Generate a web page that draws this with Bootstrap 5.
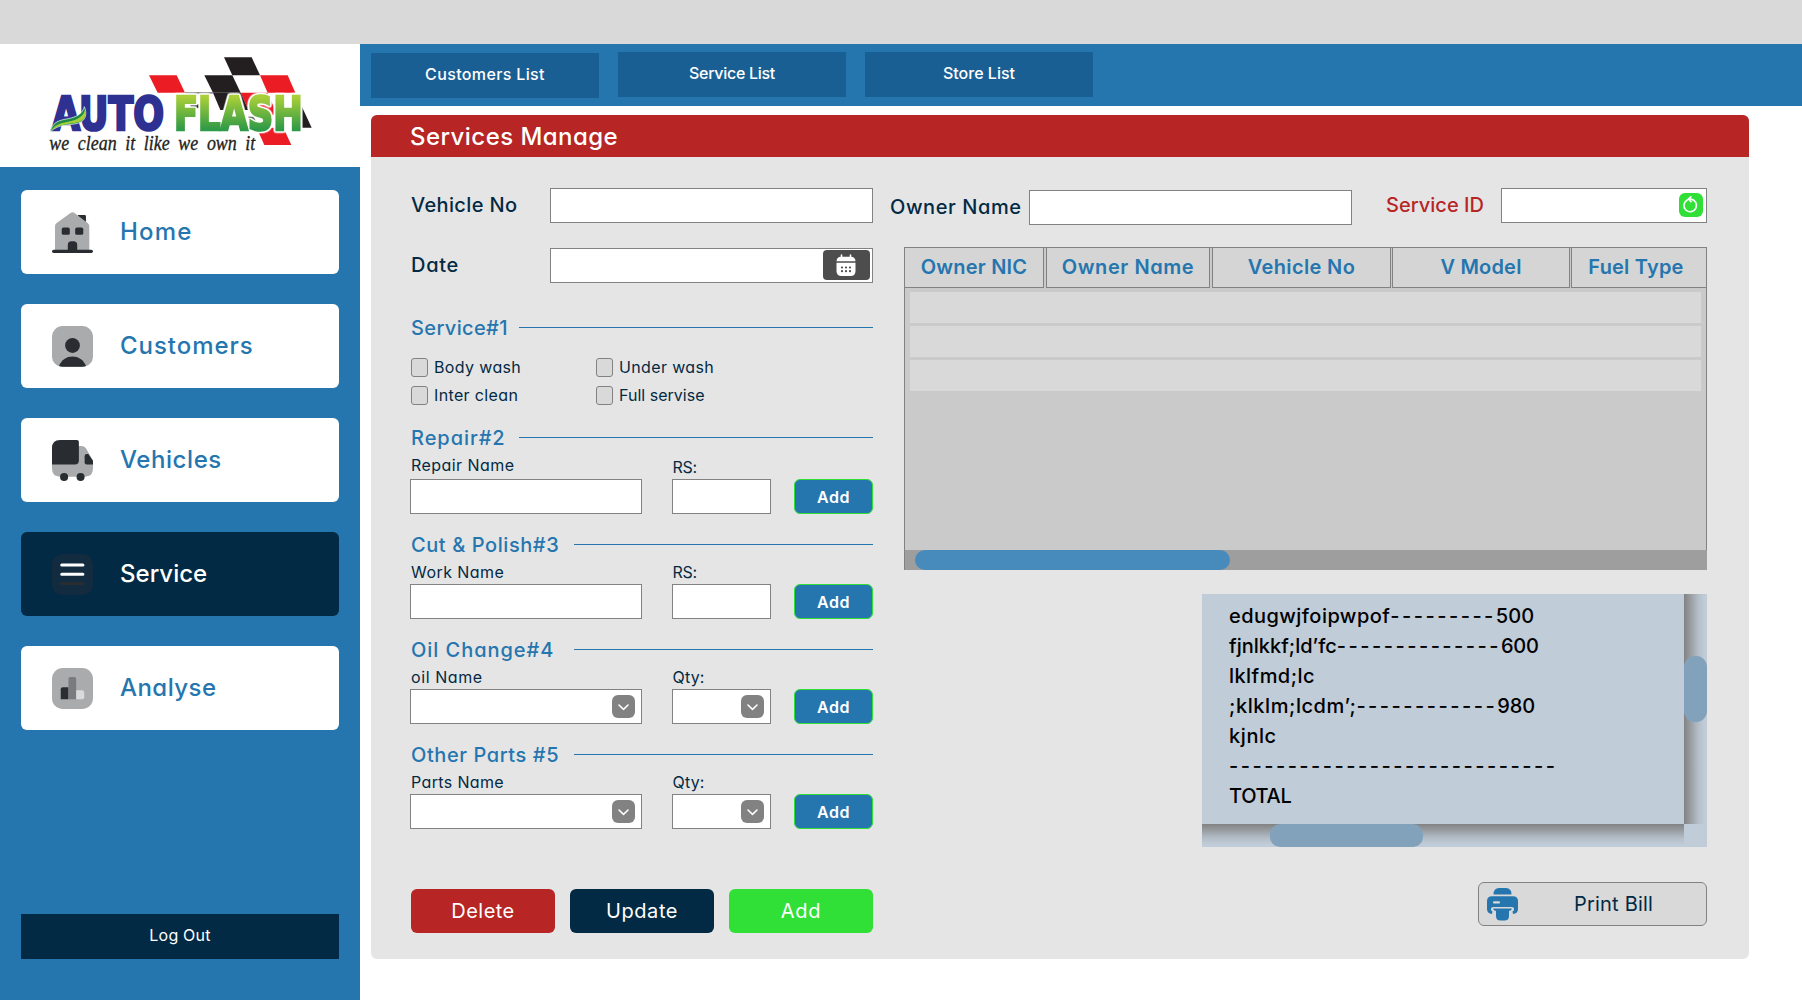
<!DOCTYPE html>
<html lang="en">
<head>
<meta charset="utf-8">
<meta name="viewport" content="width=device-width, initial-scale=1">
<title>Auto Flash - Services Manage</title>
<link href="https://cdn.jsdelivr.net/npm/bootstrap@5.3.0/dist/css/bootstrap.min.css" rel="stylesheet">
<style>
:root{--af-blue:#2576af;--af-navy:#032a44;--af-red:#b72525;--af-green:#30e037;--af-line:#828282}
body{font-family:Inter,Poppins,"Open Sans",sans-serif;font-feature-settings:"cv11";font-size:20px;font-weight:500;line-height:1;color:var(--af-navy);background:#fff;height:1000px;overflow:hidden}
/* tracking steps */
.k0{letter-spacing:-.3px}.k1{letter-spacing:.02px}.k2{letter-spacing:.2px}.k3{letter-spacing:.36px}.k4{letter-spacing:.45px}.k5{letter-spacing:.58px}.k6{letter-spacing:.7px}.k7{letter-spacing:.95px}.k8{letter-spacing:1.2px}.k9{letter-spacing:2.48px}
.titlebar{height:44px;background:#d9d9d9}
.shell{height:956px}
.sidebar{width:360px;background:var(--af-blue);flex:none}
.brand{height:123px;background:#fff;padding:6px 0 0 30px}
.word-flash{filter:drop-shadow(4px 0 0 #fff) drop-shadow(-4px 0 0 #fff) drop-shadow(0 4px 0 #fff) drop-shadow(0 -4px 0 #fff)}
.side-nav{padding:23px 21px 0;gap:30px}
.side-link{height:84px;border-radius:6px;background:#fff;color:var(--af-blue);font-size:24px;padding:0 0 0 31px;gap:27px}
.side-link.active{background:var(--af-navy);color:#fff}
.logout{margin:auto 21px 41px;height:45px;background:var(--af-navy);color:#fff;font-size:16px}
.btn.logout{padding:0 0 3px}
.topbar{height:62px;background:var(--af-blue);padding:8px 0 0 11px;gap:19px}
.top-link{width:228px;height:45px;background:#195f93;color:#fff;font-size:16px;padding-bottom:3px}
.top-link.low{margin-top:1px;padding-bottom:4px}
.panel{margin:9px 0 0 11px;width:1378px;height:844px;border-radius:6px;background:#e5e5e5;overflow:hidden}
.panel-title{height:42px;background:var(--af-red);color:#fff;font-size:24px;padding:2px 0 0 39px}
.left-col{width:463px;margin-left:39px;padding-top:31px}
.right-col{width:817px;margin-left:17px;padding-top:31px}
.field{height:35px;border:1px solid var(--af-line);border-radius:0;background:#fff;padding:0 8px;font-size:16px}
.lbl{line-height:35px;padding-left:1px;white-space:nowrap}
.lbl-owner{width:139px;padding-left:0;margin-top:2px}
.lbl-sid{width:149px;padding-left:34px;color:var(--af-red)}
.down{margin-top:2px}
.w-main{width:323px}.w-label{width:140px}.w-name{width:232px}.w-qty{width:99px}.w-sid{width:206px}
.row-date{margin-top:25px}
.cal-btn{position:absolute;right:3px;top:2px;width:47px;height:30px;border-radius:4px;background:#4d4d4d;padding-right:1px}
.sect{height:30px;color:var(--af-blue);margin-top:16px}
.sect-first{margin-top:30px}.sect-repair{margin-top:18px}
.sect .cap-s{width:109px;padding-left:1px}.sect .cap-l{width:164px;padding-left:1px}
.sect .rule{height:1px;background:var(--af-blue);margin-bottom:1px}
.small-l{font-size:16px;font-weight:400;line-height:24px;padding-left:1px;display:block}
.tall .small-l{line-height:24px;height:26px}
.tall .small-l.drop{line-height:28px;height:26px}
.qty{margin-left:6px}
.checks{margin-top:15px}.checks+.checks{margin-top:9px}
.chk{width:185px;height:19px;font-size:16px;font-weight:400;gap:6px;padding-left:1px}
.chk span{margin-bottom:2px}
.chk input{appearance:none;width:17px;height:19px;border:1px solid var(--af-line);border-radius:3px;background:#d9d9d9;margin:0}
.add-btn{width:79px;height:35px;border-radius:6px;border:1px solid var(--af-green);background:var(--af-blue);color:#fff;font-size:16px;font-weight:600}
.chev{position:absolute;right:7px;top:6px;width:23px;height:23px}
.actions{margin:60px 0 0 1px}
.act{width:144px;height:44px;border-radius:6px;color:#fff;border:0}
.act-del{background:var(--af-red)}.act-upd{background:var(--af-navy)}.act-add{background:var(--af-green)}
.refresh{position:absolute;right:4px;top:5px;width:24px;height:24px}
.owner-row{height:37px}
.grid-box{margin:22px 0 0 14px;width:803px;height:323px;background:#cacaca;border:1px solid var(--af-line);border-bottom:0}
.grid-head{height:40px;color:var(--af-blue);font-weight:600}
.hcell{background:#d5d5d5;border-bottom:1px solid var(--af-line);border-right:1px solid var(--af-line);padding-bottom:1px}
.hcell+.hcell{border-left:1px solid var(--af-line)}
.c-nic{width:139px;margin-right:2px}.c-own{width:164px;margin-right:2px}.c-veh{width:179px;margin-right:1px}.c-mod{width:178px;margin-right:1px}.c-fuel{width:135px;padding-right:6px}
.grid-rows{padding:4px 5px 0;gap:3px;height:262px}
.grid-rows div{height:31px;background:#d9d9d9}
.grid-scroll{height:20px;background:#9e9e9e;margin-right:-1px;padding-left:10px}
.grid-scroll div{width:315px;height:20px;border-radius:10px;background:#478bbc}
.bill{margin:24px 0 0 auto;width:505px;height:253px;background:#c0ccd8;color:#000}
.bill-text{width:482px;height:230px;padding:7px 0 0 27px;line-height:30px}
.bill-text div{white-space:pre}
.vbar{width:23px;background:linear-gradient(90deg,#828282,#b4bec8 62%,#c0ccd8 90%);padding-top:62px}
.vbar div{height:66px;border-radius:11px;background:#82a1bb}
.hbar{width:482px;height:23px;background:linear-gradient(180deg,#828282,#b4bec8 62%,#c0ccd8 90%);padding-left:68px}
.hbar div{width:153px;height:23px;border-radius:10px;background:#82a1bb}
.print-btn{margin:35px 0 0 auto;width:229px;height:44px;border:1px solid var(--af-line);border-radius:6px;background:#d9d9d9;color:var(--af-navy);padding:0 0 0 8px}
.print-btn span{margin-left:56px}
svg{display:block;flex:none}
</style>
</head>
<body>
<div class="titlebar"></div>
<div class="shell d-flex">
  <aside class="sidebar d-flex flex-column">
    <div class="brand">
      <svg width="300" height="110" viewBox="0 0 900 330">
        <defs><linearGradient id="gf" x1="0" y1="130" x2="0" y2="250" gradientUnits="userSpaceOnUse"><stop offset=".1" stop-color="#a8ce38"/><stop offset=".9" stop-color="#2f9a47"/></linearGradient></defs>
        <g fill="#ec1c24"><path d="M357 76H440L465 128H383Z"/><path d="M690 76H773L796 128H713Z"/><path d="M632 128H713L735 180H655Z"/><path d="M680 233H760L784 285H703Z"/><path d="M700 175H740V195H700Z"/></g>
        <g fill="#231f20"><path d="M582 22H665L690 76H607Z"/><path d="M523 76H607L632 128H549Z"/><path d="M549 128H632L655 180H571Z"/><path d="M465 126H549V131H465Z" fill="#8a8a8a"/><path d="M480 163H520V175H484Z"/><path d="M655 200H670L690 233H668Z"/><path d="M797 130L845 233H800Z"/></g>
        <g font-family="DejaVu Sans" font-weight="700" font-size="138">
          <text x="66" y="240" textLength="336" lengthAdjust="spacingAndGlyphs" fill="#2e3192" stroke="#2e3192" stroke-width="8">AUTO</text>
          <text class="word-flash" x="432" y="240" textLength="386" lengthAdjust="spacingAndGlyphs" fill="url(#gf)" stroke="url(#gf)" stroke-width="8">FLASH</text>
        </g>
        <path d="M60 246C70 205 105 211 130 202C152 194 159 183 163 170C172 190 168 212 146 219C115 228 90 219 60 246Z" fill="#1d8a45" stroke="#fff" stroke-width="2"/>
        <path d="M62 244C78 216 108 219 134 210C156 202 162 190 165 180C170 196 164 211 144 217C114 225 88 219 62 244Z" fill="#a4d13a"/>
        <text x="58" y="300" font-family="Liberation Serif" font-style="italic" font-size="60" fill="#231f20" stroke="#231f20" stroke-width="1" textLength="618" lengthAdjust="spacingAndGlyphs" word-spacing="14">we clean it like we own it</text>
      </svg>
    </div>
    <nav class="side-nav nav flex-column">
      <a class="side-link d-flex align-items-center text-decoration-none"><svg width="41" height="41" viewBox="0 0 122 122"><path d="M77 9H97Q101 9 101 13V40L77 22Z" fill="#292d32"/><path d="M9 116V42Q9 36 14 33L55 3Q61-1 67 3L106 33Q111 37 111 42V116Z" fill="#a9abad"/><rect x="29" y="46" width="24" height="22" rx="5" fill="#292d32"/><rect x="69" y="46" width="24" height="22" rx="5" fill="#292d32"/><path d="M47 115V98Q47 87 58 87H64Q75 87 75 98V115Z" fill="#292d32"/><rect y="112" width="122" height="10" rx="5" fill="#292d32"/></svg><span class="k8">Home</span></a>
      <a class="side-link d-flex align-items-center text-decoration-none"><svg width="41" height="41" viewBox="0 0 122 122"><rect width="122" height="122" rx="32" fill="#a9abad"/><circle cx="61" cy="58" r="22" fill="#292d32"/><path d="M21 119C28 101 43 91 61 91S94 101 101 119Q96 121 88 121H34Q26 121 21 119Z" fill="#292d32"/></svg><span class="k7">Customers</span></a>
      <a class="side-link d-flex align-items-center text-decoration-none"><svg width="41" height="41" viewBox="0 0 122 122"><path d="M0 60V85Q0 109 24 109H98Q122 109 122 85V62L102 26Q98 18 88 18H70V60Z" fill="#a9abad"/><path d="M0 73V24Q0 0 24 0H74Q80 0 80 6V61Q80 73 68 73Z" fill="#292d32"/><path d="M108 42H103Q97 42 97 49V66Q97 73 103 73H122V62Z" fill="#292d32"/><circle cx="36" cy="110" r="12" fill="#292d32"/><circle cx="85" cy="110" r="12" fill="#292d32"/></svg><span class="k5">Vehicles</span></a>
      <a class="side-link active d-flex align-items-center text-decoration-none"><svg width="41" height="41" viewBox="0 0 122 122"><rect width="122" height="122" rx="32" fill="#122b3e"/><g stroke-width="9" stroke-linecap="round"><path d="M29 33H92M29 60H92" stroke="#fff"/><path d="M29 88H92" stroke="#292d32"/></g></svg><span class="k1">Service</span></a>
      <a class="side-link d-flex align-items-center text-decoration-none"><svg width="41" height="41" viewBox="0 0 122 122"><rect width="122" height="122" rx="32" fill="#a9abad"/><path d="M26 93V63Q26 57 32 57H49V93Z" fill="#292d32"/><path d="M49 93V33Q49 27 55 27H66Q72 27 72 33V93Z" fill="#797b7e"/><path d="M72 93V66H89Q96 66 96 73V88Q96 93 90 93Z" fill="#d9dadb"/></svg><span class="k4">Analyse</span></a>
    </nav>
    <button class="logout btn rounded-0 k2">Log Out</button>
  </aside>

  <main class="flex-grow-1">
    <div class="topbar d-flex">
      <a class="top-link low d-flex align-items-center justify-content-center text-decoration-none k3">Customers List</a>
      <a class="top-link d-flex align-items-center justify-content-center text-decoration-none k0">Service List</a>
      <a class="top-link d-flex align-items-center justify-content-center text-decoration-none k1">Store List</a>
    </div>
    <section class="panel">
      <div class="panel-title d-flex align-items-center k4">Services Manage</div>
      <div class="d-flex">
        <div class="left-col">
          <div class="d-flex"><label class="lbl w-label k3">Vehicle No</label><input class="form-control field w-main"></div>
          <div class="row-date d-flex"><label class="lbl w-label k6">Date</label>
            <div class="position-relative"><input class="form-control field w-main">
              <span class="cal-btn d-flex align-items-center justify-content-center"><svg width="20" height="22" viewBox="0 0 20 22"><path d="M5.500 1V4M14.500 1V4" stroke="#fff" stroke-width="1.600" stroke-linecap="round"/><path d="M.5 7.300Q.8 2.800 5 2.800H15Q19.200 2.800 19.500 7.300Z" fill="#fff"/><path d="M.5 8.800H19.500V17Q19.500 22 14.500 22H5.500Q.5 22 .5 17Z" fill="#fff"/><g fill="#4d4d4d"><circle cx="6" cy="13.500" r="1.100"/><circle cx="10" cy="13.500" r="1.100"/><circle cx="14" cy="13.500" r="1.100"/><circle cx="6" cy="17.200" r="1.100"/><circle cx="10" cy="17.200" r="1.100"/><circle cx="14" cy="17.200" r="1.100"/></g></svg></span>
            </div></div>

          <div class="sect sect-first d-flex align-items-center"><span class="cap-s k3">Service#1</span><div class="rule flex-grow-1"></div></div>
          <div class="checks d-flex"><label class="chk d-flex align-items-center k3"><input type="checkbox"><span>Body wash</span></label><label class="chk d-flex align-items-center k3"><input type="checkbox"><span>Under wash</span></label></div>
          <div class="checks d-flex"><label class="chk d-flex align-items-center k3"><input type="checkbox"><span>Inter clean</span></label><label class="chk d-flex align-items-center k1"><input type="checkbox"><span>Full servise</span></label></div>

          <div class="sect sect-repair d-flex align-items-center"><span class="cap-s k7">Repair#2</span><div class="rule flex-grow-1"></div></div>
          <div class="tall d-flex align-items-end justify-content-between">
            <div><label class="small-l k4">Repair Name</label><input class="form-control field w-name"></div>
            <div class="qty"><label class="small-l drop k0">RS:</label><input class="form-control field w-qty"></div>
            <button class="btn add-btn p-0 k5">Add</button></div>

          <div class="sect d-flex align-items-center"><span class="cap-l k5">Cut &amp; Polish#3</span><div class="rule flex-grow-1"></div></div>
          <div class="d-flex align-items-end justify-content-between">
            <div><label class="small-l k4">Work Name</label><input class="form-control field w-name"></div>
            <div class="qty"><label class="small-l k0">RS:</label><input class="form-control field w-qty"></div>
            <button class="btn add-btn p-0 k5">Add</button></div>

          <div class="sect d-flex align-items-center"><span class="cap-l k7">Oil Change#4</span><div class="rule flex-grow-1"></div></div>
          <div class="d-flex align-items-end justify-content-between">
            <div><label class="small-l k5">oil Name</label><div class="position-relative"><input class="form-control field w-name"><svg class="chev" viewBox="0 0 23 23"><rect width="23" height="23" rx="6" fill="#828282"/><path d="M7 10L11.500 14.300L16 10" fill="none" stroke="#fff" stroke-width="1.600" stroke-linecap="round" stroke-linejoin="round"/></svg></div></div>
            <div class="qty"><label class="small-l k2">Qty:</label><div class="position-relative"><input class="form-control field w-qty"><svg class="chev" viewBox="0 0 23 23"><rect width="23" height="23" rx="6" fill="#828282"/><path d="M7 10L11.500 14.300L16 10" fill="none" stroke="#fff" stroke-width="1.600" stroke-linecap="round" stroke-linejoin="round"/></svg></div></div>
            <button class="btn add-btn p-0 k5">Add</button></div>

          <div class="sect d-flex align-items-center"><span class="cap-l k5">Other Parts #5</span><div class="rule flex-grow-1"></div></div>
          <div class="d-flex align-items-end justify-content-between">
            <div><label class="small-l k3">Parts Name</label><div class="position-relative"><input class="form-control field w-name"><svg class="chev" viewBox="0 0 23 23"><rect width="23" height="23" rx="6" fill="#828282"/><path d="M7 10L11.500 14.300L16 10" fill="none" stroke="#fff" stroke-width="1.600" stroke-linecap="round" stroke-linejoin="round"/></svg></div></div>
            <div class="qty"><label class="small-l k2">Qty:</label><div class="position-relative"><input class="form-control field w-qty"><svg class="chev" viewBox="0 0 23 23"><rect width="23" height="23" rx="6" fill="#828282"/><path d="M7 10L11.500 14.300L16 10" fill="none" stroke="#fff" stroke-width="1.600" stroke-linecap="round" stroke-linejoin="round"/></svg></div></div>
            <button class="btn add-btn p-0 k5">Add</button></div>

          <div class="actions d-flex justify-content-between">
            <button class="act act-del k4">Delete</button><button class="act act-upd k5">Update</button><button class="act act-add k6">Add</button></div>
        </div>

        <div class="right-col">
          <div class="owner-row d-flex">
            <label class="lbl lbl-owner k5">Owner Name</label><input class="form-control field w-main down">
            <label class="lbl lbl-sid k1">Service ID</label>
            <div class="position-relative"><input class="form-control field w-sid"><svg class="refresh" viewBox="0 0 24 24"><rect width="24" height="24" rx="6" fill="#30e037"/><path d="M8.200 6.900A6.300 6.300 0 1 0 12 6.200H10" fill="none" stroke="#fff" stroke-width="1.700" stroke-linecap="round"/><path d="M11.800 3.800L9.400 6.200L12 8.600" fill="none" stroke="#fff" stroke-width="1.700" stroke-linecap="round" stroke-linejoin="round"/></svg></div>
          </div>
          <div class="grid-box">
            <div class="grid-head d-flex">
              <div class="hcell c-nic d-flex align-items-center justify-content-center k2">Owner NIC</div>
              <div class="hcell c-own d-flex align-items-center justify-content-center k5">Owner Name</div>
              <div class="hcell c-veh d-flex align-items-center justify-content-center k3">Vehicle No</div>
              <div class="hcell c-mod d-flex align-items-center justify-content-center k2">V Model</div>
              <div class="hcell c-fuel d-flex align-items-center justify-content-center border-end-0 k2">Fuel Type</div>
            </div>
            <div class="grid-rows d-flex flex-column"><div></div><div></div><div></div></div>
            <div class="grid-scroll"><div></div></div>
          </div>
          <div class="bill d-flex flex-wrap">
            <div class="bill-text">
              <div class="k4">edugwjfoipwpof<span class="k9">---------</span><span class="k1">500</span></div>
              <div class="k1">fjnlkkf;ld’fc<span class="k9">--------------</span><span class="k0">600</span></div>
              <div class="k4">lklfmd;lc</div>
              <div class="k5">;klklm;lcdm’;<span class="k9">------------</span><span class="k1">980</span></div>
              <div class="k5">kjnlc</div>
              <div class="k9">----------------------------</div>
              <div class="k0">TOTAL</div>
            </div>
            <div class="vbar"><div></div></div>
            <div class="hbar"><div></div></div>
          </div>
          <button class="print-btn d-flex align-items-center"><svg width="31" height="33" viewBox="0 0 31 33" fill="#2576af"><path d="M6.500 6.500Q6.500 0 12 0H19Q24.500 0 24.500 6.500Z"/><path d="M5 8.300H26Q31 8.300 31 13V21Q31 25.500 26 26L25.500 23.500Q27.500 22.800 27 20.500Q26.600 19 25 19H6Q4.400 19 4 20.500Q3.500 22.800 5.500 23.500L5 26Q0 25.500 0 21V13Q0 8.300 5 8.300ZM6.500 13.300Q5.300 14.400 6.500 15.600H12.500Q13.700 14.400 12.500 13.300Z" fill-rule="evenodd"/><path d="M6 20.500H25Q24.500 22.500 22 23V28Q22 32.600 17.500 32.600H13.500Q9 32.600 9 28V23Q6.500 22.500 6 20.500Z"/></svg><span class="k2">Print Bill</span></button>
        </div>
      </div>
    </section>
  </main>
</div>
<script src="https://cdn.jsdelivr.net/npm/bootstrap@5.3.0/dist/js/bootstrap.bundle.min.js"></script>
</body>
</html>
